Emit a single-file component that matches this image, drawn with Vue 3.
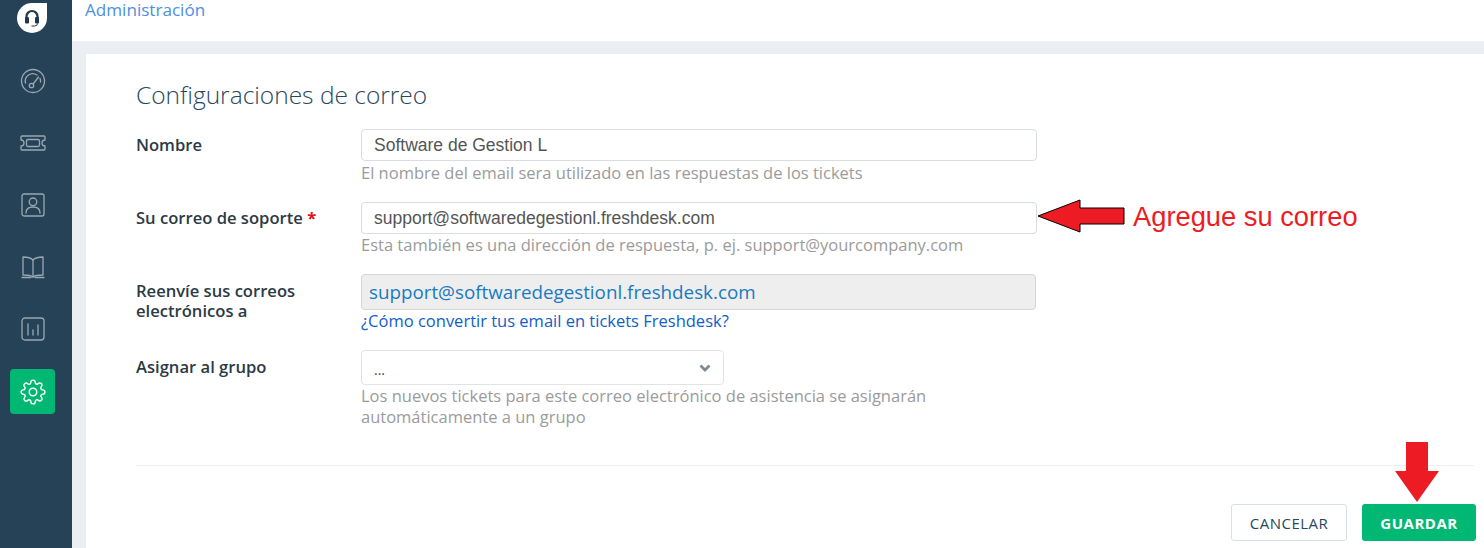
<template>
  <div class="page">
    <aside class="sidebar">
      <div class="logo">
        <svg width="32" height="32" viewBox="0 0 32 32">
          <path d="M16 1H31V16A15 15 0 0 1 1 16A15 15 0 0 1 16 1Z" fill="#fff" />
          <path d="M10.5 20V14.5a5.5 5.5 0 0 1 11 0V20" fill="none" stroke="#1f3a4d" stroke-width="2.2" />
          <rect x="9" y="15" width="4" height="6.4" rx="1.2" fill="#1f3a4d" />
          <rect x="19" y="15" width="4" height="6.4" rx="1.2" fill="#1f3a4d" />
          <path d="M21.5 21.5q0 2.5-3 2.5h-3" fill="none" stroke="#1f3a4d" stroke-width="1" />
        </svg>
      </div>
      <a class="nav-item" v-for="icon in navIcons" :key="icon.name" :class="{ active: icon.active }">
        <svg width="26" height="26" :viewBox="icon.box || '0 0 26 26'" fill="none" :stroke="icon.active ? '#fff' : '#9aa8b3'" stroke-width="1.3" stroke-linecap="round" stroke-linejoin="round">
          <path v-for="(d, i) in icon.paths" :key="i" :d="d" />
        </svg>
      </a>
    </aside>

    <main class="main">
      <header class="topbar">Administración</header>
      <section class="card">
        <h2 class="title">Configuraciones de correo</h2>

        <div class="row row-name">
          <label class="label">Nombre</label>
          <div class="field">
            <input class="input" value="Software de Gestion L" />
            <p class="hint">El nombre del email sera utilizado en las respuestas de los tickets</p>
          </div>
        </div>

        <div class="row row-support">
          <label class="label">Su correo de soporte <span class="req">*</span></label>
          <div class="field">
            <input class="input" value="support@softwaredegestionl.freshdesk.com" />
            <p class="hint">Esta también es una dirección de respuesta, p. ej. support@yourcompany.com</p>
          </div>
          <div class="callout">
            <svg width="88" height="34" viewBox="0 0 88 34">
              <path d="M1 17L43 1V9H87V25H43V33Z" fill="#ed1c24" stroke="#000" stroke-width="1" />
            </svg>
            <span class="callout-text">Agregue su correo</span>
          </div>
        </div>

        <div class="row row-forward">
          <label class="label">Reenvíe sus correos electrónicos a</label>
          <div class="field">
            <div class="readonly">support@softwaredegestionl.freshdesk.com</div>
            <a class="help-link">¿Cómo convertir tus email en tickets Freshdesk?</a>
          </div>
        </div>

        <div class="row row-group">
          <label class="label">Asignar al grupo</label>
          <div class="field">
            <div class="select">
              <span>...</span>
              <svg width="12" height="8" viewBox="0 0 12 8">
                <path d="M1.5 1.5L6 6L10.5 1.5" fill="none" stroke="#7b8a96" stroke-width="2.8" />
              </svg>
            </div>
            <p class="hint hint-group">Los nuevos tickets para este correo electrónico de asistencia se asignarán automáticamente a un grupo</p>
          </div>
        </div>

        <div class="actions">
          <button class="btn btn-cancel">CANCELAR</button>
          <div class="save-wrap">
            <svg class="save-arrow" width="44" height="60" viewBox="0 0 44 60">
              <path d="M11 0H33V29H44L22 60L0 29H11Z" fill="#ed1c24" />
            </svg>
            <button class="btn btn-save">GUARDAR</button>
          </div>
        </div>
      </section>
    </main>
  </div>
</template>

<script setup>
const navIcons = [
  {
    name: 'dashboard',
    paths: [
      'M13 1.5a11.5 11.5 0 1 1 0 23a11.5 11.5 0 0 1 0-23Z',
      'M5.5 15a7.5 7.5 0 0 1 11.5-8',
      'M20 10.5a7.5 7.5 0 0 1 .5 3.5',
      'M13.5 15.5L18.5 9',
      'M11.5 15.3a2.2 2.2 0 1 1 0 4.4a2.2 2.2 0 0 1 0-4.4Z'
    ]
  },
  {
    name: 'tickets',
    paths: [
      'M2 6h22a1 1 0 0 1 1 1v3a3 3 0 0 0 0 6v3a1 1 0 0 1-1 1H2a1 1 0 0 1-1-1v-3a3 3 0 0 0 0-6V7a1 1 0 0 1 1-1Z',
      'M8 9.5h10a1.5 1.5 0 0 1 1.5 1.5v4a1.5 1.5 0 0 1-1.5 1.5H8a1.5 1.5 0 0 1-1.5-1.5v-4A1.5 1.5 0 0 1 8 9.5Z'
    ]
  },
  {
    name: 'contacts',
    paths: [
      'M4 2h18a2 2 0 0 1 2 2v18a2 2 0 0 1-2 2H4a2 2 0 0 1-2-2V4a2 2 0 0 1 2-2Z',
      'M13 6a3.8 3.8 0 1 1 0 7.6a3.8 3.8 0 0 1 0-7.6Z',
      'M6 21c0-4 3-6 7-6s7 2 7 6'
    ]
  },
  {
    name: 'solutions',
    paths: [
      'M13 6C11 4 7 3 3 3v18c4 0 8 0 10 2c2-2 6-2 10-2V3c-4 0-8 1-10 3Z',
      'M13 6v17',
      'M2 23.5h9M15 23.5h9'
    ]
  },
  {
    name: 'reports',
    paths: [
      'M5 2h16a3 3 0 0 1 3 3v16a3 3 0 0 1-3 3H5a3 3 0 0 1-3-3V5a3 3 0 0 1 3-3Z',
      'M8 8v11',
      'M13 14v5',
      'M18 9v10'
    ]
  },
  {
    name: 'admin',
    active: true,
    box: '0 0 24 24',
    paths: [
      'M19.4 15a1.65 1.65 0 0 0 .33 1.82l.06.06a2 2 0 0 1 0 2.83 2 2 0 0 1-2.83 0l-.06-.06a1.65 1.65 0 0 0-1.82-.33 1.65 1.65 0 0 0-1 1.51V21a2 2 0 0 1-2 2 2 2 0 0 1-2-2v-.09A1.65 1.65 0 0 0 9 19.4a1.65 1.65 0 0 0-1.82.33l-.06.06a2 2 0 0 1-2.83 0 2 2 0 0 1 0-2.83l.06-.06a1.65 1.65 0 0 0 .33-1.82 1.65 1.65 0 0 0-1.51-1H3a2 2 0 0 1-2-2 2 2 0 0 1 2-2h.09A1.65 1.65 0 0 0 4.6 9a1.65 1.65 0 0 0-.33-1.82l-.06-.06a2 2 0 0 1 0-2.83 2 2 0 0 1 2.83 0l.06.06a1.65 1.65 0 0 0 1.82.33H9a1.65 1.65 0 0 0 1-1.51V3a2 2 0 0 1 2-2 2 2 0 0 1 2 2v.09a1.65 1.65 0 0 0 1 1.51 1.65 1.65 0 0 0 1.82-.33l.06-.06a2 2 0 0 1 2.83 0 2 2 0 0 1 0 2.83l-.06.06a1.65 1.65 0 0 0-.33 1.82V9a1.65 1.65 0 0 0 1.51 1H21a2 2 0 0 1 2 2 2 2 0 0 1-2 2h-.09a1.65 1.65 0 0 0-1.51 1z',
      'M12 8.5a3.5 3.5 0 1 1 0 7a3.5 3.5 0 0 1 0-7Z'
    ]
  }
]
</script>

<style>
html,
body {
  margin: 0;
  background: #fff;
}
</style>

<style scoped>
* {
  box-sizing: border-box;
}

.page {
  display: flex;
  width: 1484px;
  height: 548px;
  overflow: hidden;
  font-family: "Open Sans", "Noto Sans", sans-serif;
  color: #333;
}

.sidebar {
  width: 72px;
  flex-shrink: 0;
  background: #264257;
  display: flex;
  flex-direction: column;
  padding-left: 10px;
}

.logo {
  height: 34px;
  margin: 2px 0 5px 6px;
  display: flex;
  align-items: flex-start;
}

.nav-item {
  width: 45px;
  height: 45px;
  margin-top: 17px;
  border-radius: 4px;
  display: flex;
  align-items: center;
  justify-content: center;
}

.nav-item.active {
  margin-top: 18px;
  background: #00b873;
}

.main {
  flex: 1;
  display: flex;
  flex-direction: column;
  background: #ebeff3;
  min-width: 0;
}

.topbar {
  height: 41px;
  flex-shrink: 0;
  background: #fff;
  padding-left: 13px;
  font-size: 17.1px;
  line-height: 20px;
  color: #4d8fe0;
}

.card {
  flex: 1;
  margin: 13px 0 0 14px;
  background: #fff;
  padding: 26px 10px 0 50px;
}

.title {
  margin: 0 0 19px;
  font-size: 24.5px;
  line-height: 30px;
  font-weight: 300;
  color: #29475c;
}

.row {
  display: flex;
  position: relative;
}

.row-name {
  height: 73px;
}

.row-support {
  height: 72px;
}

.row-forward {
  height: 76px;
}

.row-group {
  height: 116px;
  border-bottom: 1px solid #ebeff3;
}

.label {
  width: 225px;
  flex-shrink: 0;
  padding-top: 6px;
  font-size: 16.6px;
  line-height: 20px;
  font-weight: 600;
  color: #2c3a45;
}

.row-forward .label {
  padding-top: 7px;
  padding-right: 30px;
}

.row-group .label {
  padding-top: 7px;
}

.req {
  color: #e0101e;
  font-weight: 700;
}

.field {
  width: 676px;
}

.input {
  display: block;
  width: 676px;
  height: 32px;
  padding: 0 12px;
  border: 1px solid #d7dde0;
  border-radius: 4px;
  font-family: "Liberation Sans", sans-serif;
  font-size: 17.5px;
  color: #555;
  outline: none;
}

.hint {
  margin: 1px 0 0;
  font-size: 16.5px;
  line-height: 21px;
  color: #9b9b9b;
}

.row-support .hint,
.hint-group {
  margin-top: 0;
}

.hint-group {
  width: 600px;
}

.readonly {
  width: 675px;
  height: 36px;
  padding-left: 7px;
  background: #eee;
  border: 1px solid #d5d5d5;
  border-radius: 4px;
  font-size: 18.8px;
  line-height: 35px;
  color: #1a7ac0;
}

.help-link {
  display: block;
  font-size: 16.5px;
  line-height: 21px;
  color: #1060c8;
}

.select {
  width: 363px;
  height: 35px;
  padding: 0 12px;
  border: 1px solid #e0e3e6;
  border-radius: 4px;
  display: flex;
  align-items: center;
  justify-content: space-between;
  font-size: 14px;
  color: #444;
}

.select span {
  margin-top: 4px;
}

.callout {
  position: absolute;
  left: 901px;
  top: -4px;
  display: flex;
  align-items: center;
  gap: 8px;
}

.callout-text {
  margin-top: 2px;
  font-family: "Liberation Sans", sans-serif;
  font-size: 27.3px;
  line-height: 34px;
  color: #ed1c24;
  white-space: nowrap;
}

.actions {
  display: flex;
  justify-content: flex-end;
  gap: 15px;
  margin-top: 38px;
  margin-right: -2px;
}

.btn {
  height: 37px;
  border-radius: 3px;
  font-family: inherit;
  font-size: 15px;
  letter-spacing: 0.5px;
}

.btn-cancel {
  width: 116px;
  background: #fff;
  border: 1px solid #d9dfe6;
  color: #29475c;
}

.save-wrap {
  position: relative;
}

.btn-save {
  width: 114px;
  background: #00b873;
  border: none;
  color: #fff;
  font-weight: 700;
}

.save-arrow {
  position: absolute;
  left: 33px;
  top: -62px;
}
</style>
